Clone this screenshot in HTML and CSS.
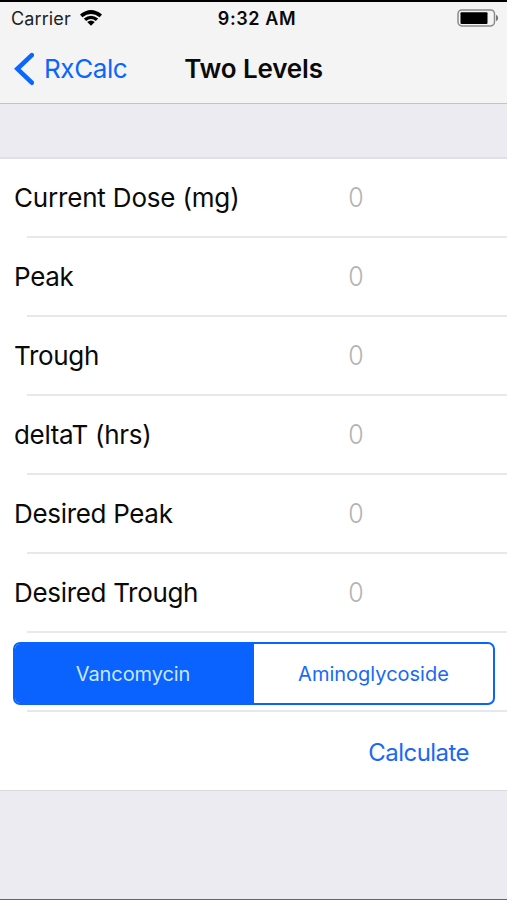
FILE: index.html
```html
<!DOCTYPE html>
<html lang="en">
<head>
<meta charset="utf-8">
<title>Two Levels</title>
<link rel="stylesheet" href="styles.css">
</head>
<body>
<main class="screen">
  <header class="top">
    <div class="status">
      <div class="carrier"><span>Carrier</span>
        <svg class="wifi" width="24" height="18" viewBox="0 0 24 18"><path d="M1 5.6Q12-3.6 23 5.6L20.6 8.2Q12 1.6 3.4 8.2ZM4.8 9.5Q12 3.8 19.2 9.5L16.8 12Q12 8.2 7.2 12ZM8.2 13.1Q12 10 15.8 13.1L12 16.8Z"/></svg>
      </div>
      <div class="time">9:32 AM</div>
      <svg class="battery" width="42" height="18" viewBox="0 0 42 18"><rect x="1" y=".9" width="36.5" height="16" rx="3.8" fill="none" stroke="#8b8b8b" stroke-width="1.5"/><rect x="3.5" y="3.2" width="27" height="11.8" rx="1"/><path d="M39 5.8Q41.2 6.8 41.2 9T39 12.2Z" fill="#777"/></svg>
    </div>
    <nav class="nav">
      <a class="back"><svg width="20" height="34" viewBox="0 0 20 34"><path d="M17.8 3.1 3.4 16.8 17.8 30.7"/></svg><span>RxCalc</span></a>
      <h1>Two Levels</h1>
    </nav>
  </header>
  <section class="form">
    <label class="row"><span class="name wide">Current Dose (mg)</span><span class="value">0</span></label>
    <label class="row"><span class="name">Peak</span><span class="value">0</span></label>
    <label class="row"><span class="name">Trough</span><span class="value">0</span></label>
    <label class="row"><span class="name">deltaT (hrs)</span><span class="value">0</span></label>
    <label class="row"><span class="name">Desired Peak</span><span class="value">0</span></label>
    <label class="row"><span class="name">Desired Trough</span><span class="value">0</span></label>
    <div class="row choices"><div class="segments"><div class="segment selected"><span>Vancomycin</span></div><div class="segment"><span>Aminoglycoside</span></div></div></div>
    <div class="row action"><span>Calculate</span></div>
  </section>
</main>
</body>
</html>
```
FILE: styles.css
```css
* { box-sizing: border-box; }
body { margin: 0; font-family: Inter, sans-serif; color: #0a0a0a; }
.screen { height: 900px; background: #ebebf1; border-top: 2px solid #000; border-bottom: 1px solid #666; overflow: hidden; }
.top { height: 102px; background: #f4f4f4; border-bottom: 1px solid #c4c4c6; }
.status { height: 32px; display: grid; grid-template-columns: 1fr auto 1fr; align-items: center; padding: 0 8px 0 11px; font-size: 18px; }
.carrier { display: flex; align-items: center; gap: 8px; letter-spacing: .12px; color: #222; }
.wifi { fill: #000; }
.time { font-weight: 600; letter-spacing: .6px; padding-left: 4px; }
.battery { justify-self: end; }
.nav { height: 69px; display: grid; grid-template-columns: 1fr auto 1fr; align-items: center; padding: 0 14px; }
.back { display: flex; align-items: center; gap: 10px; color: #0a66ff; font-size: 26px; letter-spacing: -.4px; }
.back path { fill: none; stroke: #0a66ff; stroke-width: 4.6; stroke-linecap: round; }
h1 { margin: 0; font-size: 26px; font-weight: 600; letter-spacing: -.15px; }
.form { margin-top: 53px; height: 634px; background: #fff; border-top: 2px solid #e0e0e5; border-bottom: 1px solid #d8d8dc; }
.row { height: 79px; display: flex; align-items: center; padding: 0 0 3px 14px; font-size: 26px; background: linear-gradient(#e8e8ea, #e8e8ea) 27px 100% / 100% 2px no-repeat; }
.name { width: 334px; white-space: nowrap; letter-spacing: -.32px; }
.wide { letter-spacing: -.18px; }
.value { color: #b4b4b4; font-weight: 300; transform: scale(.96, 1.04); }
.choices { padding: 2px 12px 0 13px; }
.segments { width: 100%; height: 63px; display: flex; border: 2px solid #0a62ff; border-radius: 7px; overflow: hidden; background: #fff; }
.segment { flex: 1; display: flex; align-items: center; justify-content: center; color: #1a69f5; font-size: 20px; }
.selected { flex: 0 0 239px; background: #0a62ff; color: #c8e8ff; letter-spacing: -.1px; padding-right: 3px; }
.action { justify-content: flex-end; padding: 2px 38px 0 0; color: #1a69f5; font-size: 24px; letter-spacing: -.55px; background: none; }
```
